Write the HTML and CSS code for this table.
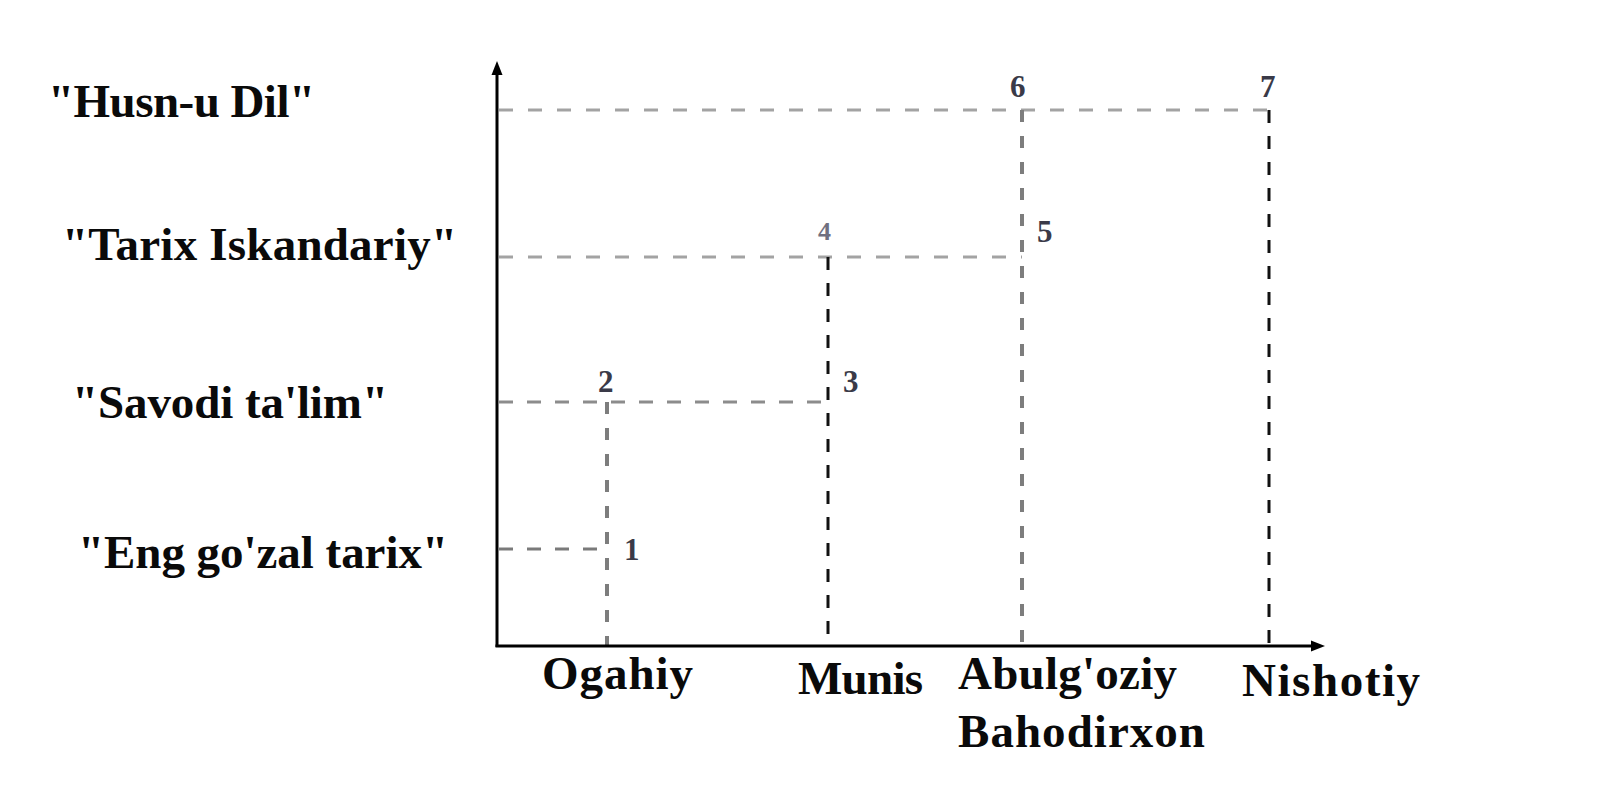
FILE: index.html
```html
<!DOCTYPE html>
<html lang="uz">
<head>
<meta charset="utf-8">
<title>Diagram</title>
<link rel="stylesheet" href="styles.css">
</head>
<body>
<main class="canvas">
  <svg class="chart" width="1598" height="796" viewBox="0 0 1598 796" xmlns="http://www.w3.org/2000/svg">
    <!-- horizontal guides -->
    <line class="h-guide" x1="499" y1="110" x2="1269" y2="110"/>
    <line class="h-guide" x1="499" y1="257" x2="1022" y2="257"/>
    <line class="h-guide h-dark" x1="499" y1="402" x2="828" y2="402"/>
    <line class="h-guide h-darker" x1="499" y1="549" x2="607" y2="549"/>

    <!-- vertical guides -->
    <line class="v-gray" x1="607" y1="402" x2="607" y2="645"/>
    <line class="v-black" x1="828" y1="257" x2="828" y2="645"/>
    <line class="v-gray" x1="1022" y1="110" x2="1022" y2="645"/>
    <line class="v-black" x1="1269" y1="110" x2="1269" y2="645"/>

    <!-- axes -->
    <line class="axis" x1="497" y1="70" x2="497" y2="647"/>
    <line class="axis" x1="495.5" y1="646" x2="1316" y2="646"/>
    <polygon class="arrow" points="497,61 491.5,75 502.5,75"/>
    <polygon class="arrow" points="1325,646 1311,640.5 1311,651.5"/>

    <!-- point numbers -->
    <text class="num" x="624" y="560">1</text>
    <text class="num" x="598" y="392">2</text>
    <text class="num" x="843" y="392">3</text>
    <text class="num num-light" x="818" y="240">4</text>
    <text class="num" x="1037" y="242">5</text>
    <text class="num" x="1010" y="97">6</text>
    <text class="num" x="1260" y="97">7</text>

    <!-- y labels -->
    <text class="label" x="48" y="117" textLength="267" lengthAdjust="spacing">"Husn-u Dil"</text>
    <text class="label" x="62" y="260" textLength="395" lengthAdjust="spacing">"Tarix Iskandariy"</text>
    <text class="label" x="72" y="418" textLength="316" lengthAdjust="spacing">"Savodi ta'lim"</text>
    <text class="label" x="78" y="568" textLength="370" lengthAdjust="spacing">"Eng go'zal tarix"</text>

    <!-- x labels -->
    <text class="label" x="542" y="689" textLength="151" lengthAdjust="spacing">Ogahiy</text>
    <text class="label" x="798" y="694" textLength="125" lengthAdjust="spacing">Munis</text>
    <text class="label" x="958" y="689" textLength="219" lengthAdjust="spacing">Abulg'oziy</text>
    <text class="label" x="958" y="747" textLength="247" lengthAdjust="spacing">Bahodirxon</text>
    <text class="label" x="1242" y="696" textLength="178" lengthAdjust="spacing">Nishotiy</text>
  </svg>
</main>
</body>
</html>
```

FILE: styles.css
```css
html, body {
  margin: 0;
  padding: 0;
  background: #ffffff;
}

.canvas {
  width: 1598px;
  height: 796px;
  overflow: hidden;
  background: #ffffff;
}

.chart {
  display: block;
}

.axis {
  stroke: #000000;
  stroke-width: 3;
}

.arrow {
  fill: #000000;
}

.h-guide {
  stroke: #a3a3a3;
  stroke-width: 3;
  stroke-dasharray: 14 15;
}

.h-dark {
  stroke: #8c8c8c;
  stroke-dasharray: 14 14;
}

.h-darker {
  stroke: #7a7a7a;
  stroke-dasharray: 14 14;
}

.v-gray {
  stroke: #7d7d7d;
  stroke-width: 4;
  stroke-dasharray: 12 14;
}

.v-black {
  stroke: #111111;
  stroke-width: 3;
  stroke-dasharray: 13 13;
}

.num {
  font-family: "Liberation Serif", "Times New Roman", serif;
  font-weight: bold;
  font-size: 31px;
  fill: #3a3a48;
}

.num-light {
  fill: #707080;
  font-size: 26px;
}

.label {
  font-family: "Liberation Serif", "Times New Roman", serif;
  font-weight: bold;
  font-size: 47px;
  fill: #0a0a0a;
}
```
